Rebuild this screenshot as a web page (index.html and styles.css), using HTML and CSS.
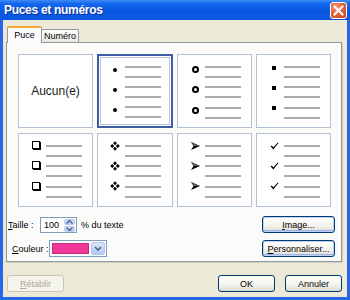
FILE: index.html
```html
<!DOCTYPE html>
<html>
<head>
<meta charset="utf-8">
<link rel="stylesheet" href="styles.css">
</head>
<body>
<div class="window">
  <div class="titlebar">
    <span class="title">Puces et numéros</span>
    <span class="close"><svg width="11" height="11" viewBox="0 0 11 11"><path d="M1.5 1.5 L9.5 9.5 M9.5 1.5 L1.5 9.5" stroke="#fff" stroke-width="2" stroke-linecap="square"/></svg></span>
  </div>
  <div class="content">
    <div class="tabs">
      <div class="tab active">Puce</div>
      <div class="tab">Numéro</div>
    </div>
    <div class="panel">
      <div class="grid">
        <div class="cell none">Aucun(e)</div>
        <div class="cell sel">
          <div class="item"><span class="b b-dot"><span class="dot"></span></span><span class="ln"><i></i><i></i></span></div>
          <div class="item"><span class="b b-dot"><span class="dot"></span></span><span class="ln"><i></i><i></i></span></div>
          <div class="item"><span class="b b-dot"><span class="dot"></span></span><span class="ln"><i></i><i></i></span></div>
        </div>
        <div class="cell">
          <div class="item"><span class="b b-dot"><span class="ring"></span></span><span class="ln"><i></i><i></i></span></div>
          <div class="item"><span class="b b-dot"><span class="ring"></span></span><span class="ln"><i></i><i></i></span></div>
          <div class="item"><span class="b b-dot"><span class="ring"></span></span><span class="ln"><i></i><i></i></span></div>
        </div>
        <div class="cell">
          <div class="item"><span class="b b-sq"><span class="sq"></span></span><span class="ln"><i></i><i></i></span></div>
          <div class="item"><span class="b b-sq"><span class="sq"></span></span><span class="ln"><i></i><i></i></span></div>
          <div class="item"><span class="b b-sq"><span class="sq"></span></span><span class="ln"><i></i><i></i></span></div>
        </div>
        <div class="cell">
          <div class="item"><span class="b b-up"><span class="box"></span></span><span class="ln"><i></i><i></i></span></div>
          <div class="item"><span class="b b-up"><span class="box"></span></span><span class="ln"><i></i><i></i></span></div>
          <div class="item"><span class="b b-up"><span class="box"></span></span><span class="ln"><i></i><i></i></span></div>
        </div>
        <div class="cell">
          <div class="item"><span class="b b-up"><svg width="10" height="10" viewBox="0 0 10 10"><path d="M5 0.2 L7 2.2 L5 4.2 L3 2.2Z M2.2 3 L4.2 5 L2.2 7 L0.2 5Z M7.8 3 L9.8 5 L7.8 7 L5.8 5Z M5 5.8 L7 7.8 L5 9.8 L3 7.8Z" fill="#000"/></svg></span><span class="ln"><i></i><i></i></span></div>
          <div class="item"><span class="b b-up"><svg width="10" height="10" viewBox="0 0 10 10"><path d="M5 0.2 L7 2.2 L5 4.2 L3 2.2Z M2.2 3 L4.2 5 L2.2 7 L0.2 5Z M7.8 3 L9.8 5 L7.8 7 L5.8 5Z M5 5.8 L7 7.8 L5 9.8 L3 7.8Z" fill="#000"/></svg></span><span class="ln"><i></i><i></i></span></div>
          <div class="item"><span class="b b-up"><svg width="10" height="10" viewBox="0 0 10 10"><path d="M5 0.2 L7 2.2 L5 4.2 L3 2.2Z M2.2 3 L4.2 5 L2.2 7 L0.2 5Z M7.8 3 L9.8 5 L7.8 7 L5.8 5Z M5 5.8 L7 7.8 L5 9.8 L3 7.8Z" fill="#000"/></svg></span><span class="ln"><i></i><i></i></span></div>
        </div>
        <div class="cell">
          <div class="item"><span class="b b-up"><svg width="9" height="8" viewBox="0 0 9 8"><path d="M0 0 L9 4 L0 8 L2.6 4Z" fill="#000"/><path d="M0 0 L9 4 L2.6 4Z" fill="#5a5a5a"/></svg></span><span class="ln"><i></i><i></i></span></div>
          <div class="item"><span class="b b-up"><svg width="9" height="8" viewBox="0 0 9 8"><path d="M0 0 L9 4 L0 8 L2.6 4Z" fill="#000"/><path d="M0 0 L9 4 L2.6 4Z" fill="#5a5a5a"/></svg></span><span class="ln"><i></i><i></i></span></div>
          <div class="item"><span class="b b-up"><svg width="9" height="8" viewBox="0 0 9 8"><path d="M0 0 L9 4 L0 8 L2.6 4Z" fill="#000"/><path d="M0 0 L9 4 L2.6 4Z" fill="#5a5a5a"/></svg></span><span class="ln"><i></i><i></i></span></div>
        </div>
        <div class="cell">
          <div class="item"><span class="b b-up"><svg width="9" height="8" viewBox="0 0 9 8"><path d="M0.5 4.2 L2 3.6 L3.2 5.6 L7.8 0.5 L8.5 1 L3.3 7.5Z" fill="#000"/></svg></span><span class="ln"><i></i><i></i></span></div>
          <div class="item"><span class="b b-up"><svg width="9" height="8" viewBox="0 0 9 8"><path d="M0.5 4.2 L2 3.6 L3.2 5.6 L7.8 0.5 L8.5 1 L3.3 7.5Z" fill="#000"/></svg></span><span class="ln"><i></i><i></i></span></div>
          <div class="item"><span class="b b-up"><svg width="9" height="8" viewBox="0 0 9 8"><path d="M0.5 4.2 L2 3.6 L3.2 5.6 L7.8 0.5 L8.5 1 L3.3 7.5Z" fill="#000"/></svg></span><span class="ln"><i></i><i></i></span></div>
        </div>
      </div>
      <div class="row">
        <span class="label l-taille"><u>T</u>aille :</span>
        <span class="spin">
          <span class="spin-val">100</span>
          <span class="spin-btns">
            <span class="sb"><svg width="7" height="4" viewBox="0 0 7 4"><path d="M0.5 3.5 L3.5 0.5 L6.5 3.5" fill="none" stroke="#4D6185" stroke-width="1.4"/></svg></span>
            <span class="sb"><svg width="7" height="4" viewBox="0 0 7 4"><path d="M0.5 0.5 L3.5 3.5 L6.5 0.5" fill="none" stroke="#4D6185" stroke-width="1.4"/></svg></span>
          </span>
        </span>
        <span class="unit">% du texte</span>
        <span class="btn wide"><u>I</u>mage...</span>
      </div>
      <div class="row row2">
        <span class="label l-coul"><u>C</u>ouleur :</span>
        <span class="combo">
          <span class="swatch"></span>
          <span class="drop"><svg width="8" height="5" viewBox="0 0 8 5"><path d="M1 1 L4 4 L7 1" fill="none" stroke="#4D6185" stroke-width="1.6"/></svg></span>
        </span>
        <span class="btn wide"><u>P</u>ersonnaliser...</span>
      </div>
    </div>
    <div class="footer">
      <span class="btn disabled"><u>R</u>établir</span>
      <span class="btn push">OK</span>
      <span class="btn annuler">Annuler</span>
    </div>
  </div>
</div>
</body>
</html>
```

FILE: styles.css
```css
* { box-sizing: border-box; }
html, body { margin: 0; padding: 0; }
body {
  width: 350px;
  height: 300px;
  overflow: hidden;
  font-family: "Liberation Sans", Arial, sans-serif;
  font-size: 9px;
  color: #000;
}
.window {
  width: 350px;
  height: 300px;
  display: flex;
  flex-direction: column;
  background: #2766E4;
}
.titlebar {
  height: 20px;
  flex: none;
  display: flex;
  align-items: center;
  padding-left: 4px;
  background: linear-gradient(#3E8CF5 0%, #1468EE 18%, #0756DF 55%, #0A5BE4 90%, #0B50D4 100%);
}
.title {
  color: #fff;
  font-weight: bold;
  font-size: 12px;
  letter-spacing: -0.3px;
  text-shadow: 1px 1px 0 #0D2C9A;
  flex: 1;
}
.close {
  width: 17px;
  height: 17px;
  margin-right: 3px;
  margin-top: 1px;
  border: 1px solid #fff;
  border-radius: 3px;
  background: radial-gradient(circle at 35% 30%, #F39A7C 0%, #E2633A 45%, #CB4416 100%);
  display: flex;
  align-items: center;
  justify-content: center;
}
.content {
  flex: 1;
  margin: 0 3px 3px 3px;
  background: #ECE9D8;
  display: flex;
  flex-direction: column;
}
.tabs {
  display: flex;
  align-items: flex-end;
  margin: 6px 0 0 4px;
  height: 16px;
}
.tab {
  height: 13px;
  padding: 0 4px;
  border: 1px solid #919B9C;
  border-bottom: none;
  border-radius: 2px 2px 0 0;
  background: linear-gradient(#FFFFFF, #F2F1EB 70%, #E6E4DA);
  display: flex;
  align-items: center;
  justify-content: center;
  width: 38px;
  margin-left: -1px;
  font-size: 9px;
}
.tab.active {
  width: 35px;
  height: 17px;
  margin-left: 0;
  margin-bottom: -1px;
  position: relative;
  z-index: 1;
  background: #FCFCFE;
  border-top: 2px solid #F3A834;
  padding-bottom: 2px;
}
.panel {
  margin-left: 3px;
  width: 336px;
  height: 220px;
  border: 1px solid #919B9C;
  background: #FBFBF9;
  box-shadow: 1px 1px 0 #D3D1C4;
  display: flex;
  flex-direction: column;
}
.grid {
  margin: 11px 0 0 11px;
  display: grid;
  grid-template-columns: 75px 76px 75px 75px;
  grid-template-rows: 74px 74px;
  column-gap: 4px;
  row-gap: 5px;
}
.cell {
  border: 1px solid #B3C1D4;
  background: #fff;
  padding: 11px 0 0 11px;
  display: flex;
  flex-direction: column;
}
.cell.sel {
  border: 2px solid #3D5EA6;
  box-shadow: inset 0 0 0 1px #fff, inset 0 0 0 2px #B6C3DA;
  padding: 10px 0 0 10px;
}
.cell.none {
  padding: 0;
  align-items: center;
  justify-content: center;
  font-size: 12px;
  color: #1a1a1a;
}
.item {
  height: 21px;
  display: flex;
  align-items: flex-start;
}
.b {
  width: 12px;
  height: 9px;
  margin-right: 4px;
  display: flex;
  align-items: center;
  justify-content: center;
}
.b-dot { margin-top: -1px; }
.b-sq { margin-top: -3px; }
.b-up { margin-top: -4px; }
.ln {
  width: 36px;
  display: flex;
  flex-direction: column;
  gap: 8px;
}
.ln i {
  display: block;
  height: 2px;
  background: #ABABAB;
}
.dot { width: 4px; height: 4px; border-radius: 50%; background: #000; }
.ring { width: 7px; height: 7px; border: 2px solid #000; border-radius: 50%; }
.sq { width: 4px; height: 4px; background: #000; }
.box { width: 8px; height: 8px; border: 1.5px solid #000; box-shadow: 1px 1px 0 #000; margin: -1px 0 0 -1px; }
.row {
  margin-top: 9px;
  height: 17px;
  display: flex;
  align-items: center;
  padding: 0 6px 0 1px;
}
.row2 { margin-top: 7px; }
.label { width: 32px; }
.l-coul { width: 41px; padding-left: 4px; }
.spin {
  width: 37px;
  height: 16px;
  border: 1px solid #7F9DB9;
  background: #fff;
  display: flex;
}
.spin-val {
  flex: 1;
  padding-left: 3px;
  display: flex;
  align-items: center;
}
.spin-btns {
  width: 12px;
  display: flex;
  flex-direction: column;
  padding: 1px 1px 1px 0;
  gap: 1px;
}
.sb {
  flex: 1;
  border-radius: 2px;
  background: linear-gradient(#DCE6FB, #BBCDF4);
  border: 1px solid #B6C8F0;
  display: flex;
  align-items: center;
  justify-content: center;
}
.unit { margin-left: 4px; }
.combo {
  width: 58px;
  height: 17px;
  border: 1px solid #7F9DB9;
  background: #fff;
  display: flex;
  padding: 2px 1px 2px 2px;
  gap: 2px;
}
.swatch {
  flex: 1;
  background: #F0389B;
  border: 1px solid #C52A7D;
}
.drop {
  width: 14px;
  margin: -1px 0;
  border-radius: 2px;
  background: linear-gradient(#DCE6FB, #B4C8F5);
  border: 1px solid #B2C4EE;
  display: flex;
  align-items: center;
  justify-content: center;
}
.btn {
  width: 57px;
  height: 17px;
  border: 1px solid #003C74;
  border-radius: 3px;
  background: linear-gradient(#FFFFFF, #F5F4EF 55%, #E3E0D6 90%, #D6D0C4);
  display: flex;
  align-items: center;
  justify-content: center;
  font-size: 9px;
}
.btn.wide {
  width: 73px;
  margin-left: auto;
  box-shadow: inset 0 0 0 1px #C0D2F4, inset 0 -1px 0 1px #98B4EA;
}
.btn.disabled {
  border-color: #C9C7BA;
  color: #ACA899;
  background: #F5F4EA;
}
.footer {
  margin-top: 13px;
  display: flex;
  padding: 0 5px 0 4px;
}
.push { margin-left: auto; }
.annuler { margin-left: 10px; }
```
